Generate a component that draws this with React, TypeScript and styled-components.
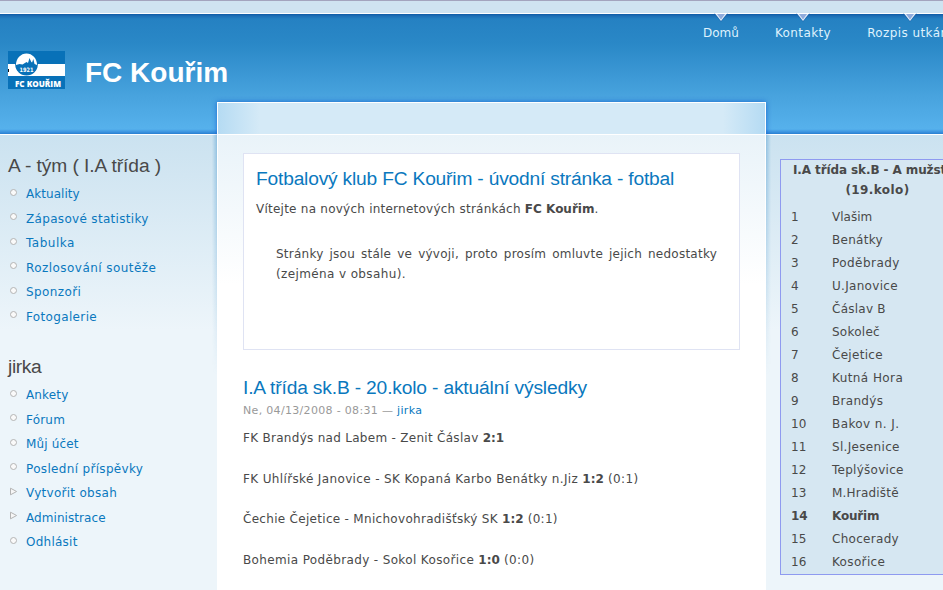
import React from 'react';
import styled, { createGlobalStyle } from 'styled-components';

const Global = createGlobalStyle`
  * { box-sizing: border-box; }
  html, body { margin: 0; padding: 0; overflow: hidden; }
  body { font: 12px/20.4px "DejaVu Sans", Verdana, sans-serif; color: #494949; background: #edf5fa; }
  ul, ol, h1, h2, h3, p { margin: 0; padding: 0; list-style: none; font-weight: normal; }
  a { color: #0a78be; text-decoration: none; }
`;
const Page = styled.div`
  width: 943px; height: 590px; overflow: hidden; display: flex; flex-direction: column;
`;
const Strip = styled.div`
  height: 14px; flex: none; background: #cfe3f1;
  border-top: 1px solid #a3a4be; border-bottom: 1px solid #fff;
`;
const Header = styled.header`
  height: 120px; flex: none; display: flex; justify-content: space-between;
  background: linear-gradient(#0f5ba6 0, #1d6fb6 2px, #2581c2 5px, #2a88c7 30px, #48a3de 82px, #56b1ec 115px, #3b93e0 118px, #2a7fd0 120px);
`;
const Brand = styled.div`
  display: flex; align-items: flex-start; padding: 37px 0 0 8px; gap: 20px;
`;
const SiteName = styled.h1`
  font: bold 28px/32px "Liberation Sans", Arial, sans-serif; color: #fff; margin-top: 6px; white-space: nowrap;
`;
const Nav = styled.nav`
  display: flex; gap: 36px; width: 240px; flex: none;
`;
const NavItem = styled.a<{ $ls?: number }>`
  flex: none; display: flex; flex-direction: column; align-items: center; color: #dff2fd;
  letter-spacing: ${p => p.$ls ?? 0}px; white-space: nowrap; line-height: 20px;
  svg { display: block; margin: -1px 0 1px; }
`;
const Main = styled.div`
  flex: 1; min-height: 0; display: grid; grid-template-columns: 217px 549px 210px; 
  border-top: 1px solid #fff; isolation: isolate;
  background: linear-gradient(#cbe2f0 0, #edf5fa 195px);
`;
const Side = styled.aside`
  padding: 19px 0 0 8px; 
`;
const SideTitle = styled.h2<{ $ls?: number }>`
  font: 19.2px/24px "Liberation Sans", Arial, sans-serif; color: #494949; white-space: nowrap;
  letter-spacing: ${p => p.$ls ?? 0}px;
`;
const Menu = styled.ul`
  padding: 4px 0 0; margin-bottom: 26px;
`;
const MenuItem = styled.li`
  height: 24.5px; display: flex; align-items: center; gap: 8px;
  svg { flex: none; margin: -4px 0 0 1px; }
`;
const Label = styled.a<{ $ls?: number }>`
  letter-spacing: ${p => p.$ls ?? 0}px; white-space: nowrap;
`;
const Center = styled.main`
  position: relative; margin-top: -33px; padding: 50px 25px 0;
  border: 1px solid #fff; border-bottom: 0;
  background:
    linear-gradient(#fff, #fff) 0 31px / 100% 1px no-repeat,
    linear-gradient(90deg, #b5dbf3, #d5eaf7 42px, #d5eaf7 505px, #b5dbf3) 0 0 / 100% 31px no-repeat,
    linear-gradient(#e9f3f9, #fff 150px) 0 32px / 100% 100% no-repeat;
  &::before {
    content: ''; position: absolute; z-index: -1; inset: 32px -6px 0;
    background:
      linear-gradient(90deg, transparent, rgba(70, 150, 205, .45)) left / 5px 100% no-repeat,
      linear-gradient(270deg, transparent, rgba(70, 150, 205, .45)) right / 5px 100% no-repeat;
    mask-image: linear-gradient(#000, transparent 240px);
  }
  &::after {
    content: ''; position: absolute; z-index: -1; top: -1px; left: -1px; right: -1px; height: 33px;
    box-shadow: 0 0 5px rgba(0, 70, 200, .65);
    clip-path: inset(-6px -6px 0);
  }
`;
const Mission = styled.section`
  height: 197px; border: 1px solid #dfe3f3; background: #fff; padding: 13px 22px 0 12px; margin-bottom: 26px;
`;
const Title = styled.h2<{ $ls?: number }>`
  font: 19.2px/24px "Liberation Sans", Arial, sans-serif; color: #0a78be; white-space: nowrap;
  letter-spacing: ${p => p.$ls ?? 0}px;
`;
const Text = styled.p<{ $ls?: number }>`
  letter-spacing: ${p => p.$ls ?? 0}px; white-space: nowrap;
  b { letter-spacing: 0; }
`;
const Welcome = styled(Text)`
  margin: 8px 0 0;
`;
const Quote = styled.div`
  margin: 25px 0 0 20px; width: 441px; line-height: 20px;
`;
const Justified = styled(Text)`
  white-space: normal; text-align-last: justify;
`;
const Meta = styled.p`
  font-size: 11px; line-height: 20px; color: #999; white-space: nowrap; letter-spacing: .32px; padding-top: 1px;
`;
const Results = styled.div`
  padding-top: 7px; display: grid; grid-auto-rows: 40.7px;
`;
const Right = styled.aside`
  padding: 24px 0 0 14px;
`;
const Table = styled.section`
  width: 195px; height: 416px; border: 1px solid #8e9af0; background: #d6e7f2;
`;
const TableTitle = styled.h3`
  font-size: 12px; font-weight: bold; line-height: 20px; text-align: center; white-space: nowrap; margin-bottom: 6px;
`;
const TableLine = styled.span<{ $ls: number }>`
  display: block; letter-spacing: ${p => p.$ls}px;
`;
const Row = styled.div<{ $own?: boolean }>`
  display: grid; grid-template-columns: 41px 1fr; height: 23px; line-height: 23px; padding-left: 10px;
  font-weight: ${p => (p.$own ? 'bold' : 'normal')};
`;
const Club = styled.span<{ $ls?: number }>`
  letter-spacing: ${p => p.$ls ?? 0}px; white-space: nowrap;
`;

const Arrow = () => (
  <svg width="14" height="9" viewBox="0 0 14 9">
    <path d="M0 0.500L7 9L14 0.500Z" fill="#1a5aa8" opacity=".5" />
    <path d="M1 0.500L7 8L13 0.500Z" fill="#e4eef8" />
    <path d="M3 1L7 6.500L11 1Z" fill="#8fabdc" />
    <path d="M1 0H13V1H1Z" fill="#fff" />
  </svg>
);
const Bullet = ({ open }: { open?: boolean }) => (
  <svg width="9" height="9" viewBox="0 0 9 9">
    {open
      ? <path d="M1.500 1.200V7.800L7.600 4.500Z" fill="#f7f7f7" stroke="#b4b4b4" />
      : <circle cx="4.500" cy="4.500" r="3" fill="#fafafa" stroke="#b4b4b4" />}
  </svg>
);
const Logo = () => (
  <svg width="57" height="38" viewBox="0 0 57 38">
    <path fill="#0871b8" d="M0 0h57v38H0z" />
    <path fill="#fff" d="M0 13h57v12H0z" />
    <circle cx="18.500" cy="13.200" r="11.300" fill="#0871b8" />
    <path fill="#fff" d="M8 14a10.500 11.500 0 0 1 21 0l-2.500-1-1.200-5-1.200 3.500-.8-.5-1.800-4-1.500 5-1.500-1-4 2.500-3-.5z" />
    <text x="18.500" y="21" textAnchor="middle" fontFamily="DejaVu Sans" fontWeight="bold" fontSize="6" textLength="14" lengthAdjust="spacingAndGlyphs" fill="#fff">1921</text>
    <text x="7" y="36" fontFamily="Open Sans" fontWeight="800" fontSize="9.500" textLength="46" lengthAdjust="spacingAndGlyphs" fill="#fff">FC KOUŘIM</text>
    <path fill="#111" d="M0 18h1v3H0z" />
  </svg>
);

type Item = { t: string; ls?: number; open?: boolean };
const team: Item[] = [
  { t: 'Aktuality', ls: 0.05 }, { t: 'Zápasové statistiky', ls: 0.32 }, { t: 'Tabulka', ls: 0.5 },
  { t: 'Rozlosování soutěže', ls: 0.45 }, { t: 'Sponzoři', ls: 0.4 }, { t: 'Fotogalerie', ls: 0.35 },
];
const user: Item[] = [
  { t: 'Ankety', ls: 0.15 }, { t: 'Fórum', ls: 0.2 }, { t: 'Můj účet', ls: 0.15 }, { t: 'Poslední příspěvky', ls: 0.33 },
  { t: 'Vytvořit obsah', ls: 0.28, open: true }, { t: 'Administrace', ls: 0.07, open: true }, { t: 'Odhlásit', ls: 0.25 },
];
const clubs: Item[] = [
  { t: 'Vlašim' }, { t: 'Benátky', ls: 0.3 }, { t: 'Poděbrady', ls: 0.45 }, { t: 'U.Janovice', ls: 0.3 },
  { t: 'Čáslav B', ls: 0.25 }, { t: 'Sokoleč', ls: 0.25 }, { t: 'Čejetice', ls: 0.3 }, { t: 'Kutná Hora', ls: 0.42 },
  { t: 'Brandýs', ls: 0.3 }, { t: 'Bakov n. J.', ls: 0.4 }, { t: 'Sl.Jesenice', ls: 0.32 },
  { t: 'Teplýšovice', ls: 0.27 }, { t: 'M.Hradiště', ls: 0.2 }, { t: 'Kouřim', ls: -0.2 },
  { t: 'Chocerady', ls: 0.3 }, { t: 'Kosořice', ls: 0.35 },
];
const SideMenu = ({ items }: { items: Item[] }) => (
  <Menu>
    {items.map(i => (
      <MenuItem key={i.t}><Bullet open={i.open} /><Label $ls={i.ls}>{i.t}</Label></MenuItem>
    ))}
  </Menu>
);

export default function App() {
  return (
    <Page>
      <Global />
      <Strip />
      <Header>
        <Brand><Logo /><SiteName>FC Kouřim</SiteName></Brand>
        <Nav>
          <NavItem><Arrow />Domů</NavItem>
          <NavItem $ls={0.4}><Arrow />Kontakty</NavItem>
          <NavItem $ls={0.4}><Arrow />Rozpis utkání</NavItem>
        </Nav>
      </Header>
      <Main>
        <Side>
          <SideTitle $ls={-0.07}>A - tým ( I.A třída )</SideTitle>
          <SideMenu items={team} />
          <SideTitle $ls={-0.35}>jirka</SideTitle>
          <SideMenu items={user} />
        </Side>
        <Center>
          <Mission>
            <Title $ls={-0.19}>Fotbalový klub FC Kouřim - úvodní stránka - fotbal</Title>
            <Welcome $ls={0.24}>Vítejte na nových internetových stránkách <b>FC Kouřim</b>.</Welcome>
            <Quote>
              <Justified $ls={0.24}>Stránky jsou stále ve vývoji, proto prosím omluvte jejich nedostatky</Justified>
              <Text $ls={0.38}>(zejména v obsahu).</Text>
            </Quote>
          </Mission>
          <Title $ls={-0.16}>I.A třída sk.B - 20.kolo - aktuální výsledky</Title>
          <Meta>Ne, 04/13/2008 - 08:31 — <a>jirka</a></Meta>
          <Results>
            <Text $ls={0.29}>FK Brandýs nad Labem - Zenit Čáslav <b>2:1</b></Text>
            <Text $ls={0.36}>FK Uhlířské Janovice - SK Kopaná Karbo Benátky n.Jiz <b>1:2</b> (0:1)</Text>
            <Text $ls={0.3}>Čechie Čejetice - Mnichovohradišťský SK <b>1:2</b> (0:1)</Text>
            <Text $ls={0.36}>Bohemia Poděbrady - Sokol Kosořice <b>1:0</b> (0:0)</Text>
          </Results>
        </Center>
        <Right>
          <Table>
            <TableTitle>
              <TableLine $ls={-0.1}>I.A třída sk.B - A mužstvo</TableLine>
              <TableLine $ls={0.4}>(19.kolo)</TableLine>
            </TableTitle>
            {clubs.map((c, i) => (
              <Row key={c.t} $own={i === 13}><span>{i + 1}</span><Club $ls={c.ls}>{c.t}</Club></Row>
            ))}
          </Table>
        </Right>
      </Main>
    </Page>
  );
}
